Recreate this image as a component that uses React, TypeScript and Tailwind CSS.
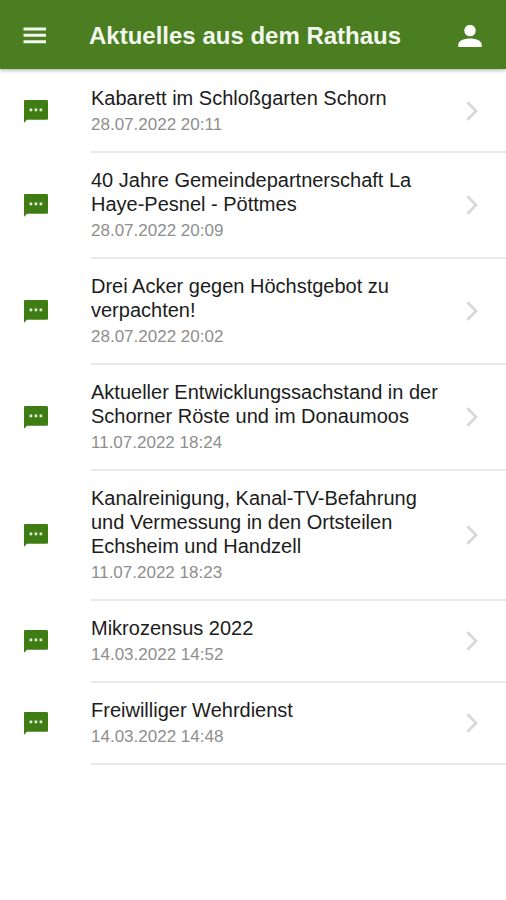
import React from 'react';

interface NewsItem {
    title: string;
    date: string;
}

const NEWS: NewsItem[] = [
    { title: 'Kabarett im Schloßgarten Schorn', date: '28.07.2022 20:11' },
    { title: '40 Jahre Gemeindepartnerschaft La Haye-Pesnel - Pöttmes', date: '28.07.2022 20:09' },
    { title: 'Drei Acker gegen Höchstgebot zu verpachten!', date: '28.07.2022 20:02' },
    { title: 'Aktueller Entwicklungssachstand in der Schorner Röste und im Donaumoos', date: '11.07.2022 18:24' },
    { title: 'Kanalreinigung, Kanal-TV-Befahrung und Vermessung in den Ortsteilen Echsheim und Handzell', date: '11.07.2022 18:23' },
    { title: 'Mikrozensus 2022', date: '14.03.2022 14:52' },
    { title: 'Freiwilliger Wehrdienst', date: '14.03.2022 14:48' },
];

const MessageIcon: React.FC = () => (
    <svg className="size-6 shrink-0" viewBox="0 0 24 24" aria-hidden="true">
        <path d="M1.2 0H22.6C23.4 0 24 .6 24 1.4V18.4C24 19.2 23.4 19.8 22.6 19.8H3L0 22.8V1.2C0 .5.5 0 1.2 0Z" fill="#3f7d14" />
        <path d="M5.6 8.6H8.2V11.2H5.6ZM10.6 8.6H13.2V11.2H10.6ZM15.6 8.6H18.2V11.2H15.6Z" fill="#e3efd9" />
    </svg>
);

const ChevronIcon: React.FC = () => (
    <svg className="h-5 w-3 shrink-0" viewBox="0 0 12 20" fill="none" stroke="#d8d8d8" strokeWidth="2.8" aria-hidden="true">
        <path d="M1.4 1.2L10 10L1.4 18.8" />
    </svg>
);

const Header: React.FC = () => (
    <header className="relative flex items-center h-[69px] bg-[#4a7e20] pl-[23px] pr-6 pt-0.5 text-white shadow-[0_1px_4px_rgba(0,0,0,0.35)]">
        <button type="button" aria-label="Menü" className="w-[66px] shrink-0">
            <svg className="h-[18px] w-6" viewBox="0 0 24 18" fill="#f3f8ee">
                <path d="M.5 .4H23V3.4H.5ZM.5 6.8H23V9.8H.5ZM.5 13.2H23V16.2H.5Z" />
            </svg>
        </button>
        <h1 className="flex-1 text-2xl font-bold text-[#f3f8ee]">Aktuelles aus dem Rathaus</h1>
        <button type="button" aria-label="Profil" className="shrink-0">
            <svg className="h-[22px] w-6" viewBox="0 0 24 22" fill="currentColor">
                <circle cx="12" cy="5.6" r="5.7" />
                <path d="M.3 22V19.6C.3 15.6 6.6 13.6 12 13.6S23.7 15.6 23.7 19.6V22Z" />
            </svg>
        </button>
    </header>
);

const NewsRow: React.FC<{ item: NewsItem }> = ({ item }) => (
    <li>
        <a href="#" className="flex pl-6">
            <span className="flex w-[67px] shrink-0 items-center">
                <MessageIcon />
            </span>
            <span className="flex flex-1 items-center border-b-2 border-[#e9e9e9] pr-7">
                <span className="flex-1 pt-[15px] pb-4 pr-5">
                    <span className="block text-xl leading-6 text-[#1c1c1c]">{item.title}</span>
                    <span className="mt-[5px] block text-[17px] leading-5 text-[#8e8e8e]">{item.date}</span>
                </span>
                <ChevronIcon />
            </span>
        </a>
    </li>
);

const App: React.FC = () => {
    return (
        <div className="min-h-screen bg-white font-['Liberation_Sans',Arial,sans-serif]">
            <Header />
            <main>
                <ul className="pt-0.5">
                    {NEWS.map(item => (
                        <NewsRow key={item.title} item={item} />
                    ))}
                </ul>
            </main>
        </div>
    );
};

export default App;
